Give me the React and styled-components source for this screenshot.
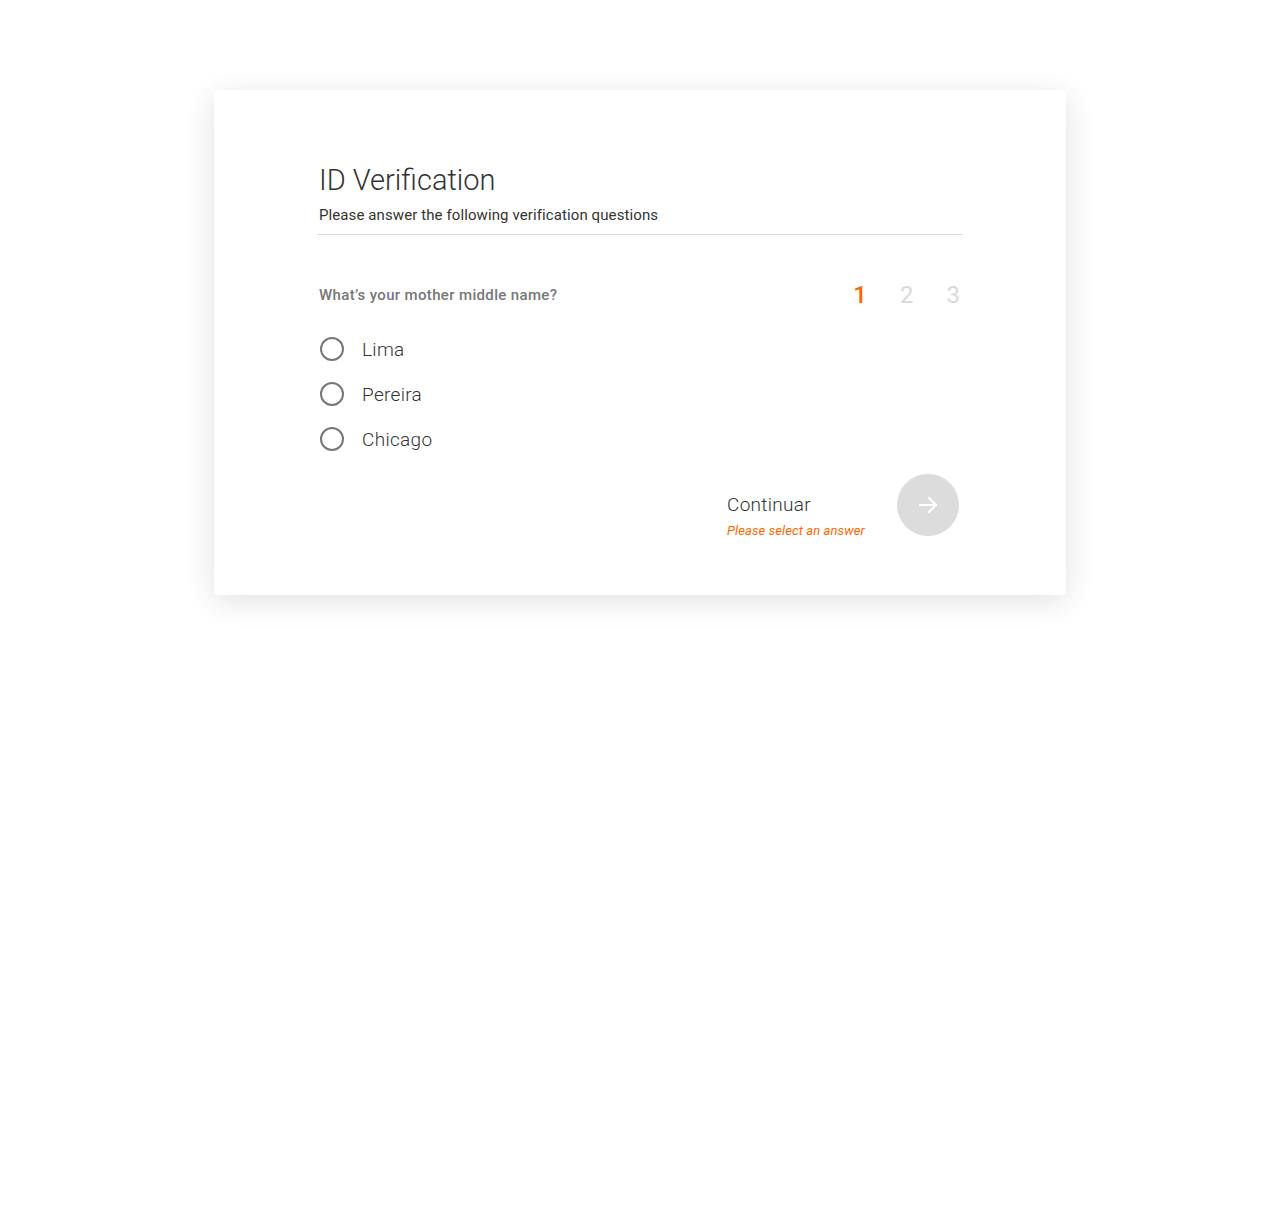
import React, { useState } from "react";
import styled, { createGlobalStyle } from "styled-components";

const GlobalStyle = createGlobalStyle`
  body {
    margin: 0;
    background: #ffffff;
    font-family: Roboto, "Liberation Sans", sans-serif;
  }
`;

const options = ["Lima", "Pereira", "Chicago"];

const App = () => {
  const [answer, setAnswer] = useState(null);

  return (
    <>
      <GlobalStyle />
      <Page>
        <Card>
          <Header>
            <Title>ID Verification</Title>
            <Subtitle>Please answer the following verification questions</Subtitle>
          </Header>
          <QuestionRow>
            <Question>What’s your mother middle name?</Question>
            <Steps>
              <Step $active>1</Step>
              <Step>2</Step>
              <Step>3</Step>
            </Steps>
          </QuestionRow>
          <Options>
            {options.map((opt) => (
              <Option key={opt} onClick={() => setAnswer(opt)}>
                <Radio $checked={answer === opt} />
                <OptionLabel>{opt}</OptionLabel>
              </Option>
            ))}
          </Options>
          <Footer>
            <ContinueText>
              <ContinueLabel>Continuar</ContinueLabel>
              {!answer && <ErrorText>Please select an answer</ErrorText>}
            </ContinueText>
            <NextButton disabled={!answer} aria-label="Continuar">
              <svg width="24" height="24" viewBox="0 0 24 24" fill="none" stroke="#fff" strokeWidth="2.2" strokeLinecap="round" strokeLinejoin="round">
                <path d="M4 12h16" />
                <path d="M13 5l7 7-7 7" />
              </svg>
            </NextButton>
          </Footer>
        </Card>
      </Page>
    </>
  );
};

const Page = styled.div`
  display: flex;
  justify-content: center;
  align-items: flex-start;
  padding-top: 90px;
  min-height: 100vh;
  box-sizing: border-box;
`;

const Card = styled.div`
  width: 852px;
  box-sizing: border-box;
  padding: 70px 103px 57px 105px;
  background: #fff;
  border-radius: 3px;
  box-shadow: 0 6px 30px rgba(0, 0, 0, 0.12);
`;

const Header = styled.div`
  border-bottom: 1px solid #dcdcdc;
  margin-left: -2px;
  padding-left: 2px;
  padding-bottom: 9px;
`;

const Title = styled.h1`
  margin: 0;
  font-size: 29px;
  font-weight: 300;
  color: #333;
  line-height: 40px;
`;

const Subtitle = styled.p`
  margin: 5px 0 0;
  font-size: 15px;
  font-weight: 400;
  letter-spacing: 0.1px;
  color: #333;
  line-height: 20px;
`;

const QuestionRow = styled.div`
  display: flex;
  justify-content: space-between;
  align-items: center;
  margin-top: 46px;
`;

const Question = styled.div`
  font-size: 15px;
  font-weight: 500;
  letter-spacing: 0.35px;
  color: #777;
`;

const Steps = styled.div`
  display: flex;
  gap: 33px;
  padding-right: 3px;
`;

const Step = styled.span`
  font-size: 24px;
  font-weight: ${(p) => (p.$active ? 500 : 400)};
  color: ${(p) => (p.$active ? "#ff6600" : "#d9d9d9")};
`;

const Options = styled.div`
  display: flex;
  flex-direction: column;
  gap: 21px;
  margin-top: 28px;
`;

const Option = styled.label`
  display: flex;
  align-items: center;
  gap: 18px;
  cursor: pointer;
  padding-left: 1px;
`;

const Radio = styled.span`
  width: 20px;
  height: 20px;
  border: 2px solid #777;
  border-radius: 50%;
  box-sizing: content-box;
  background: ${(p) => (p.$checked ? "radial-gradient(circle, #ff6600 45%, transparent 50%)" : "transparent")};
`;

const OptionLabel = styled.span`
  font-size: 19px;
  font-weight: 300;
  letter-spacing: 0.3px;
  color: #333;
`;

const Footer = styled.div`
  display: flex;
  justify-content: flex-end;
  align-items: flex-start;
  gap: 32px;
  margin-top: 23px;
`;

const ContinueText = styled.div`
  display: flex;
  flex-direction: column;
  width: 138px;
  padding-top: 20px;
`;

const ContinueLabel = styled.span`
  font-size: 19px;
  font-weight: 300;
  letter-spacing: 0.3px;
  line-height: 22px;
  color: #333;
`;

const ErrorText = styled.span`
  font-size: 13px;
  font-style: italic;
  line-height: 15px;
  letter-spacing: 0.1px;
  color: #ff6600;
  margin-top: 7px;
`;

const NextButton = styled.button`
  width: 62px;
  height: 62px;
  border: none;
  border-radius: 50%;
  background: #dcdcdc;
  display: flex;
  align-items: center;
  justify-content: center;
  margin-right: 4px;
  cursor: pointer;
  &:disabled {
    cursor: default;
  }
`;

export default App;
